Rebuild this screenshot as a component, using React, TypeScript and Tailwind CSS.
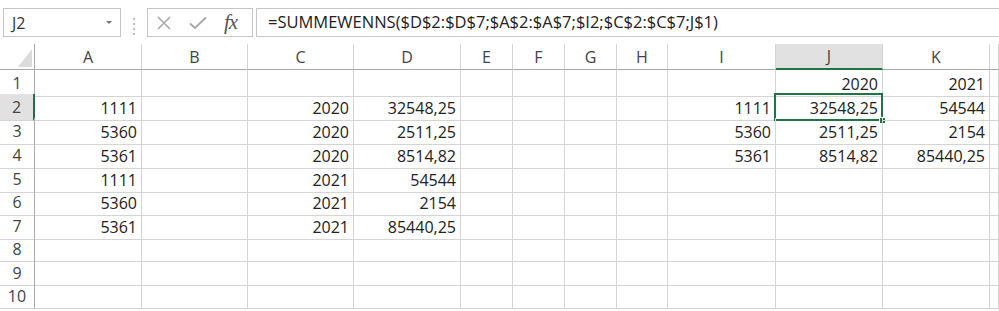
import React from "react";

const COLS = ["A", "B", "C", "D", "E", "F", "G", "H", "I", "J", "K", ""];
const ROW_H = ["h-[24px]", "h-[24px]", "h-[24px]", "h-[24px]", "h-[23px]", "h-[24px]", "h-[24px]", "h-[24px]", "h-[23px]", "h-[24px]"];
const GRID = "grid grid-cols-[35px_107px_106px_106px_107px_52px_52px_52px_51px_108px_107px_107px_1fr]";

// row index (1-based) -> column letter -> value
const DATA: Record<number, Record<string, string>> = {
  1: { J: "2020", K: "2021" },
  2: { A: "1111", C: "2020", D: "32548,25", I: "1111", J: "32548,25", K: "54544" },
  3: { A: "5360", C: "2020", D: "2511,25", I: "5360", J: "2511,25", K: "2154" },
  4: { A: "5361", C: "2020", D: "8514,82", I: "5361", J: "8514,82", K: "85440,25" },
  5: { A: "1111", C: "2021", D: "54544" },
  6: { A: "5360", C: "2021", D: "2154" },
  7: { A: "5361", C: "2021", D: "85440,25" },
};

function FormulaBar() {
  return (
    <div className="flex items-start h-[44px] bg-white">
      <div className="ml-[3px] mt-[8px] w-[118px] h-[29px] border border-[#c6c6c6] flex items-center justify-between pl-[8px] pr-[8px]">
        <span className="text-[16px] text-[#333]">J2</span>
        <span className="w-0 h-0 border-l-[3px] border-r-[3px] border-t-[3px] border-l-transparent border-r-transparent border-t-[#777]" />
      </div>
      <div className="ml-[12px] mt-[18px] flex flex-col gap-[3px]">
        <span className="w-[2px] h-[2px] bg-[#bdbdbd]" />
        <span className="w-[2px] h-[2px] bg-[#bdbdbd]" />
        <span className="w-[2px] h-[2px] bg-[#bdbdbd]" />
        <span className="w-[2px] h-[2px] bg-[#bdbdbd]" />
      </div>
      <div className="ml-[12px] mt-[8px] w-[106px] h-[29px] border border-[#c6c6c6] flex items-center">
        <svg width="14" height="14" viewBox="0 0 14 14" className="ml-[9px]">
          <path d="M1 1 L13 13 M13 1 L1 13" stroke="#a9a9a9" strokeWidth="1.6" fill="none" />
        </svg>
        <svg width="18" height="14" viewBox="0 0 18 14" className="ml-[18px]">
          <path d="M1 7.5 L6 12 L17 1.5" stroke="#a9a9a9" strokeWidth="2" fill="none" />
        </svg>
        <span className="ml-[17px] font-['Liberation_Serif'] italic text-[21px] text-[#555] leading-none tracking-[-1px]">fx</span>
      </div>
      <div className="ml-[3px] mt-[8px] flex-1 h-[29px] border-t border-b border-l border-[#c6c6c6] flex items-center pl-[11px]">
        <span className="text-[16.5px] text-[#222] whitespace-nowrap">=SUMMEWENNS($D$2:$D$7;$A$2:$A$7;$I2;$C$2:$C$7;J$1)</span>
      </div>
    </div>
  );
}

function HeaderRow() {
  return (
    <div className={`${GRID} h-[26px]`}>
      <div className="border-r border-b border-[#ababab] flex items-end justify-end pr-[2px] pb-[2px]">
        <svg width="14" height="18" viewBox="0 0 14 18">
          <polygon points="14,0 14,18 0,18" fill="#dcdcdc" />
        </svg>
      </div>
      {COLS.map((c, i) => (
        <div
          key={i}
          className={`flex items-center justify-center text-[16px] text-[#444] border-r border-[#d4d4d4] ${
            c === "J" ? "bg-[#e1e1e1] border-b-2 border-b-[#217346]" : "border-b border-b-[#ababab]"
          }`}
        >
          {c}
        </div>
      ))}
    </div>
  );
}

export default function App() {
  return (
    <div className="w-[999px] h-[311px] overflow-hidden bg-white font-['Open_Sans'] text-[#222]">
      <FormulaBar />
      <HeaderRow />
      {ROW_H.map((h, r) => {
        const row = r + 1;
        const vals = DATA[row] || {};
        return (
          <div key={row} className={`${GRID} ${h}`}>
            <div
              className={`flex items-center justify-center text-[16px] text-[#444] border-b border-[#d4d4d4] ${
                row === 2 ? "bg-[#e1e1e1] border-r-2 border-r-[#217346]" : "border-r border-r-[#ababab]"
              }`}
            >
              {row}
            </div>
            {COLS.map((c, i) => (
              <div
                key={i}
                className="relative flex items-center justify-end pr-[4px] pt-[2px] text-[16px] border-r border-b border-[#d4d4d4]"
              >
                {vals[c] ?? ""}
                {c === "J" && row === 2 && (
                  <>
                    <span className="absolute -left-[2px] -top-[1px] -right-[1px] -bottom-[1px] border-2 border-[#217346]" />
                    <span className="absolute -right-[4px] -bottom-[4px] w-[7px] h-[7px] bg-[#217346] border border-white" />
                  </>
                )}
              </div>
            ))}
          </div>
        );
      })}
    </div>
  );
}
